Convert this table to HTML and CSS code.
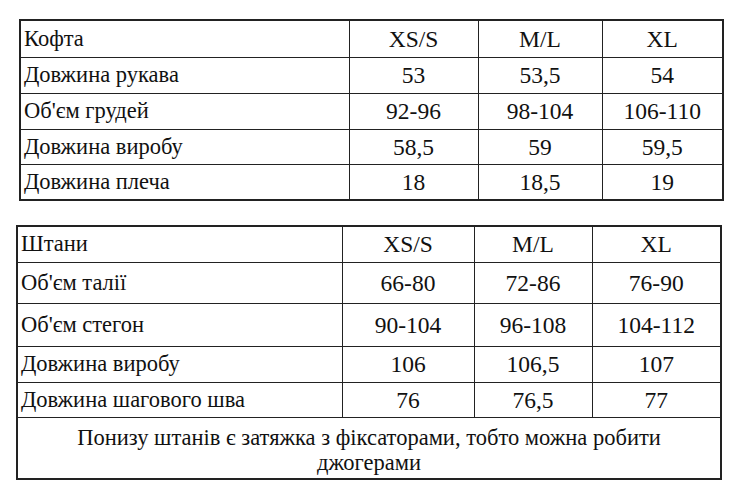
FILE: index.html
```html
<!DOCTYPE html>
<html>
<head>
<meta charset="utf-8">
<link rel="stylesheet" href="styles.css">
</head>
<body>
<div class="page">
  <table class="sizes t1">
    <colgroup><col class="c1"><col class="c2"><col class="c3"><col class="c4"></colgroup>
    <tr class="r37"><td class="lbl">Кофта</td><td>XS/S</td><td>M/L</td><td>XL</td></tr>
    <tr class="r36"><td class="lbl">Довжина рукава</td><td>53</td><td>53,5</td><td>54</td></tr>
    <tr class="r36"><td class="lbl">Об'єм грудей</td><td>92-96</td><td>98-104</td><td>106-110</td></tr>
    <tr class="r35"><td class="lbl">Довжина виробу</td><td>58,5</td><td>59</td><td>59,5</td></tr>
    <tr class="r36"><td class="lbl">Довжина плеча</td><td>18</td><td>18,5</td><td>19</td></tr>
  </table>
  <table class="sizes t2">
    <colgroup><col class="d1"><col class="d2"><col class="d3"><col class="d4"></colgroup>
    <tr class="r36"><td class="lbl">Штани</td><td>XS/S</td><td>M/L</td><td>XL</td></tr>
    <tr class="r41"><td class="lbl">Об'єм талії</td><td>66-80</td><td>72-86</td><td>76-90</td></tr>
    <tr class="r43"><td class="lbl">Об'єм стегон</td><td>90-104</td><td>96-108</td><td>104-112</td></tr>
    <tr class="r36"><td class="lbl">Довжина виробу</td><td>106</td><td>106,5</td><td>107</td></tr>
    <tr class="r35"><td class="lbl">Довжина шагового шва</td><td>76</td><td>76,5</td><td>77</td></tr>
    <tr class="r62"><td class="note" colspan="4">Понизу штанів є затяжка з фіксаторами, тобто можна робити<br>джогерами</td></tr>
  </table>
</div>
</body>
</html>
```

FILE: styles.css
```css
html, body {
  margin: 0;
  padding: 0;
  background: #fff;
}
.page {
  display: flex;
  flex-direction: column;
  gap: 24px;
  padding-top: 19px;
}
.sizes {
  border-collapse: collapse;
  table-layout: fixed;
  border: 2px solid #222;
  font-family: "Liberation Serif", "Times New Roman", serif;
  font-size: 23.5px;
  color: #111;
}
.sizes td {
  border: 1px solid #222;
  padding: 0;
  text-align: center;
  vertical-align: middle;
  line-height: 26px;
}
.sizes td.lbl {
  text-align: left;
  padding-left: 3px;
  font-size: 22.5px;
}
.sizes td.note {
  font-size: 22.5px;
  line-height: 25px;
  padding-top: 4px;
}
.t1 {
  margin-left: 19px;
  width: 703px;
}
.t2 {
  margin-left: 16px;
  width: 704px;
}
.c1 { width: 329px; }
.c2 { width: 129px; }
.c3 { width: 124px; }
.c4 { width: 121px; }
.d1 { width: 325px; }
.d2 { width: 132px; }
.d3 { width: 118px; }
.d4 { width: 129px; }
.r35 { height: 35px; }
.r36 { height: 36px; }
.r37 { height: 37px; }
.r41 { height: 41px; }
.r43 { height: 43px; }
.r62 { height: 62px; }
```
